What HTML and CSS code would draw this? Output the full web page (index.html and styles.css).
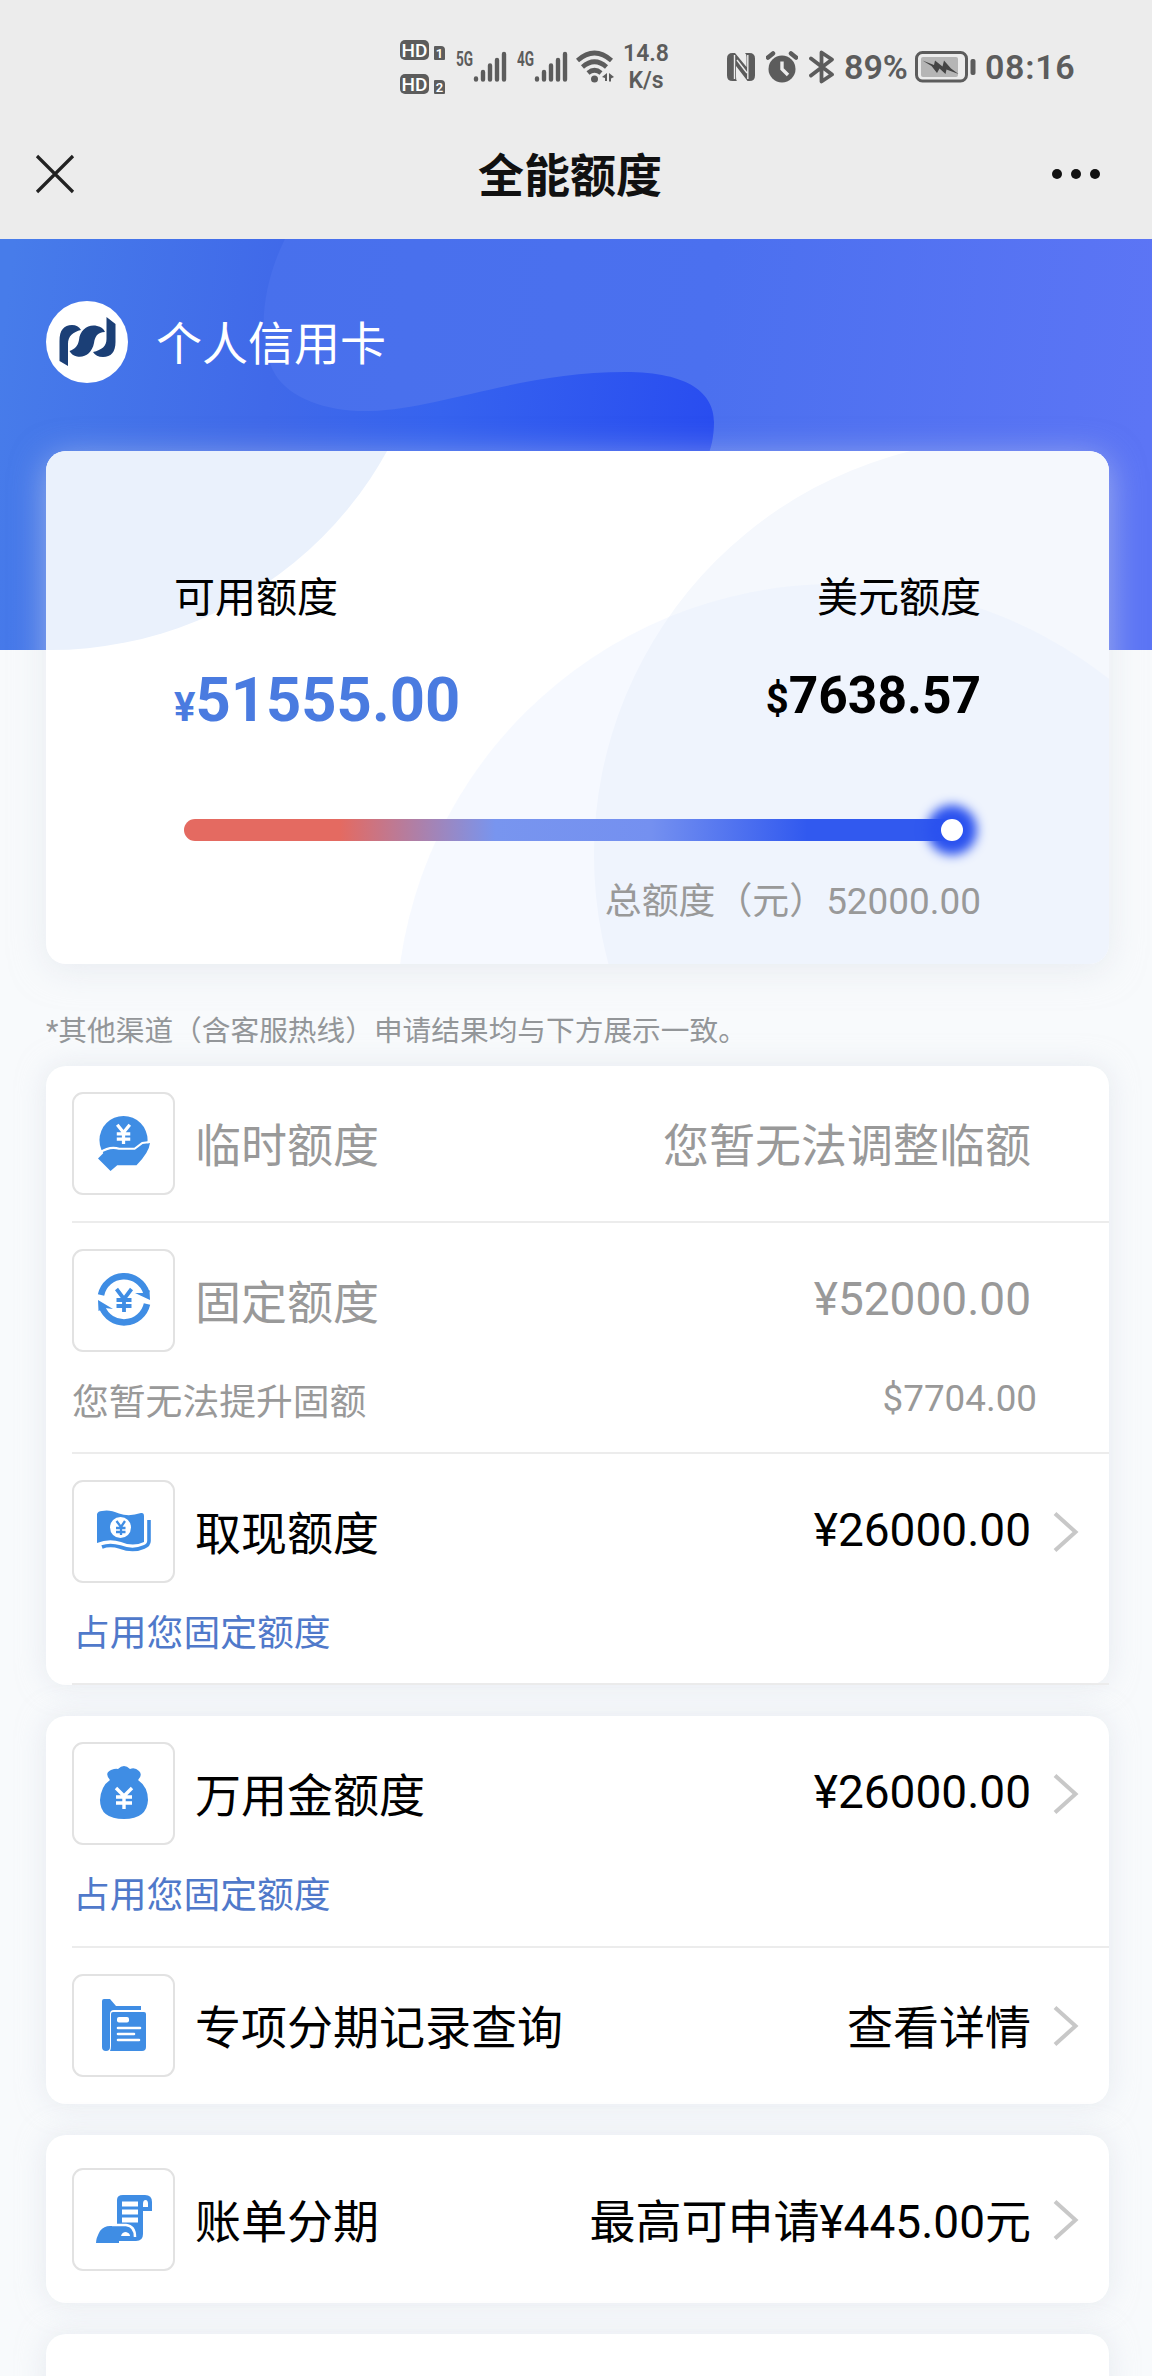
FILE: index.html
```html
<!DOCTYPE html>
<html lang="zh-CN">
<head>
<meta charset="utf-8">
<title>全能额度</title>
<link rel="stylesheet" href="styles.css">
</head>
<body>
<svg class="defs" width="0" height="0" aria-hidden="true">
  <symbol id="chevron" viewBox="0 0 26 42"><path d="M2 2.500L22.500 21L2 39.500" fill="none" stroke="#c8c8c8" stroke-width="4"/></symbol>
  <symbol id="signal" viewBox="0 0 34 32"><path d="M3 27.500v1M10 21v7.500M17 14.500v14M24 9v19.500M31 3v25.500" fill="none" stroke="#5c5c5c" stroke-width="4.400" stroke-linecap="round"/></symbol>
</svg>

<header class="top">
  <div class="status">
    <div class="hd">
      <div class="hd-row"><span class="hd-tag">HD</span><span class="sim">1</span></div>
      <div class="hd-row"><span class="hd-tag">HD</span><span class="sim">2</span></div>
    </div>
    <div class="net net-5g"><span class="gen">5G</span><svg width="34" height="32"><use href="#signal"/></svg></div>
    <div class="net net-4g"><span class="gen">4G</span><svg width="34" height="32"><use href="#signal"/></svg></div>
    <svg class="wifi" width="38" height="34" viewBox="0 0 38 34">
      <g fill="none" stroke="#5c5c5c" stroke-width="4.600"><path d="M1.500 10.500Q18.500-4.500 35.500 10.500"/><path d="M6.500 17Q18.500 6.500 30.500 17"/><path d="M12 23Q18.500 17.500 25 23"/></g>
      <circle cx="18.500" cy="29" r="3.500" fill="#5c5c5c"/><path d="M26 27l5-4v8h-2v-3zM33 23l5 4-3 1.500v3h-2z" fill="#5c5c5c"/>
    </svg>
    <div class="speed"><span>14.8</span><span>K/s</span></div>
    <svg class="nfc" width="30" height="30" viewBox="0 0 30 30"><path d="M6.500 1H9L20.500 15V5Q20.500 2 19 1H23.500Q29 1 29 6.500V23.500Q29 29 23.500 29H21.500L10 14V25Q10 28 11 29H6.500Q1 29 1 23.500V6.500Q1 1 6.500 1Z" fill="#5c5c5c"/><path d="M8.500 3V27M21.800 3V27M11 8l10 13" stroke="#ececec" stroke-width="1.400"/></svg>
    <svg class="alarm" width="32" height="32" viewBox="0 0 32 32"><circle cx="16" cy="18" r="13.500" fill="#5c5c5c"/><path d="M2 6.500l5-4M25 2.500l5 4" stroke="#5c5c5c" stroke-width="4.500" stroke-linecap="round"/><path d="M16 10.500V18l6 6" fill="none" stroke="#ececec" stroke-width="3.400"/></svg>
    <svg class="bt" width="26" height="34" viewBox="0 0 26 34"><path d="M2 8.500L23 24.500L12.500 31.500V2.500L23 9.500L2 25.500" fill="none" stroke="#5c5c5c" stroke-width="3.800" stroke-linejoin="round" stroke-linecap="round"/></svg>
    <span class="pct">89%</span>
    <svg class="battery" width="62" height="32" viewBox="0 0 62 32"><rect x="1.500" y="1.500" width="50" height="28.500" rx="6" fill="none" stroke="#5c5c5c" stroke-width="3"/><rect x="6" y="6" width="37" height="20" rx="2" fill="#b5b5b5"/><path d="M7.500 9.500L19 14l1-4.500 7.500 6L29 9.500l7 8 7.500 5.500-12-4.500-1 4.500-6-5.500-2.500 4.500-5.500-7z" fill="#444"/><rect x="55.500" y="8" width="5" height="16" rx="2" fill="#5c5c5c"/></svg>
    <span class="clock">08:16</span>
  </div>
  <nav class="nav">
    <svg class="close" width="40" height="40" viewBox="0 0 40 40"><path d="M2 2L38 38M38 2L2 38" stroke="#222" stroke-width="3.200"/></svg>
    <h1 class="title">全能额度</h1>
    <svg class="more" width="50" height="12" viewBox="0 0 50 12"><g fill="#111"><circle cx="6" cy="6" r="5"/><circle cx="25" cy="6" r="5"/><circle cx="44" cy="6" r="5"/></g></svg>
  </nav>
</header>

<section class="hero">
  <svg class="hero-bg" width="1152" height="411" viewBox="0 239 1152 411">
    <defs>
      <linearGradient id="base" gradientUnits="userSpaceOnUse" x1="0" y1="350" x2="710" y2="440"><stop offset="0" stop-color="#477cea"/><stop offset=".38" stop-color="#4069e9"/><stop offset=".62" stop-color="#3663ef"/><stop offset="1" stop-color="#294df0"/></linearGradient>
      <linearGradient id="wave" gradientUnits="userSpaceOnUse" x1="260" y1="300" x2="1152" y2="400"><stop offset="0" stop-color="#4870ec"/><stop offset=".5" stop-color="#4b70ef"/><stop offset="1" stop-color="#5c75f5"/></linearGradient>
    </defs>
    <rect y="239" width="1152" height="411" fill="url(#base)"/>
    <path d="M285 239C262 285 256 340 275 374C290 399 328 412 370 411C440 409 520 372 625 372C690 372 714 394 714 422C714 437 711 450 706 460L690 650H1152V239Z" fill="url(#wave)"/>
  </svg>
  <div class="brand">
    <svg width="82" height="82" viewBox="0 0 82 82"><circle cx="41" cy="41" r="41" fill="#fff"/>
      <path d="M13.500 40C13.500 29 18 24 26 24Q32 24 35 29C27 31 22 35 22 43V65L13.500 60Z" fill="#1b3f76"/>
      <path d="M23.500 50C29 48 32 45 33 39C34 29 42 23 51 25Q57 26 59 31C51 31 49 36 48 42C46 52 39 57 31 55.500Q26 54.500 23.500 50Z" fill="#1b3f76"/>
      <path d="M60.500 16L69.500 23V41C69.500 51 65 56 57 56Q50 56 47 51C56 49 60.500 45 60.500 38Z" fill="#1b3f76"/></svg>
    <span class="shift">个人信用卡</span>
  </div>
  <div class="quota">
    <svg class="quota-bg" width="1063" height="513" viewBox="46 451 1063 513">
      <circle cx="50" cy="265" r="385" fill="#eaf1fc"/>
      <circle cx="1010" cy="855" r="416" fill="#f5f8fd"/>
      <circle cx="836" cy="1024" r="440" fill="#e2eafe" fill-opacity=".3"/>
    </svg>
    <div class="quota-row">
      <div><div class="quota-label">可用额度</div><div class="amount-cny"><small>¥</small>51555.00</div></div>
      <div class="right"><div class="quota-label">美元额度</div><div class="amount-usd"><small>$</small>7638.57</div></div>
    </div>
    <div class="bar"><i class="knob"></i></div>
    <div class="total">总额度（元）52000.00</div>
  </div>
</section>

<main class="content">
  <p class="note">*其他渠道（含客服热线）申请结果均与下方展示一致。</p>

  <section class="card">
    <div class="row muted">
      <div class="line">
        <span class="icon"><svg width="52" height="56" viewBox="0 0 54 58"><circle cx="26.500" cy="26" r="25" fill="#3f8de4"/><path d="M20 10l6.500 8L33 10M26.500 18v12M19.500 19.500h14M19.500 25h14" fill="none" stroke="#fff" stroke-width="3.400"/><path d="M0 45L7 38Q13 34 22 36L38 37L46 30L54 29Q53 39 40 52H20L13 58Z" fill="#3f8de4"/><path d="M2 39Q12 32 22 35H38L46 29L54 28" fill="none" stroke="#fff" stroke-width="2.200"/></svg></span>
        <span class="name">临时额度</span><span class="value">您暂无法调整临额</span>
      </div>
    </div>
    <div class="row muted">
      <div class="line">
        <span class="icon"><svg width="54" height="54" viewBox="0 0 54 54"><path d="M4 22A23.500 23.500 0 0 1 49.500 20M50 31A23.500 23.500 0 0 1 5 34" fill="none" stroke="#3f8de4" stroke-width="6.500"/><path d="M38 20L46 20L52.500 17L53 27ZM16 36L8 35L1.500 38L1 27Z" fill="#3f8de4"/><path d="M19.500 16L27 26L34.500 16M27 26v13M19.500 27h15M19.500 33h15" fill="none" stroke="#3f8de4" stroke-width="3.800"/></svg></span>
        <span class="name">固定额度</span><span class="value num">¥52000.00</span>
      </div>
      <div class="sub"><span class="shift">您暂无法提升固额</span><span class="num">$7704.00</span></div>
    </div>
    <div class="row">
      <div class="line">
        <span class="icon"><svg width="54" height="42" viewBox="0 0 54 42"><path d="M0 4Q1 1 5 1Q12-1 22 3.500Q32 7 44 3Q47 2.500 47 6V32Q36 37 24 32Q12 28 0 33Z" fill="#3f8de4"/><circle cx="23.500" cy="17.500" r="10.500" fill="#fff"/><path d="M19.500 11l4.500 6 4-6M24 17v8M19 18h9.500M19 22h9.500" fill="none" stroke="#3f8de4" stroke-width="2.300"/><path d="M52 10V31Q52 35 47 37Q36 42 23 37Q13 34 5 37" fill="none" stroke="#3f8de4" stroke-width="3.600"/></svg></span>
        <span class="name">取现额度</span><span class="value num">¥26000.00</span><svg class="go" width="26" height="42"><use href="#chevron"/></svg>
      </div>
      <div class="sub link"><span class="shift">占用您固定额度</span></div>
    </div>
  </section>

  <section class="card">
    <div class="row tall">
      <div class="line">
        <span class="icon"><svg width="50" height="54" viewBox="0 0 50 54"><path d="M11 14Q5 7 12 4Q17 2 19 3Q25-3 31 3Q36 1 40 5Q44 9 39 14Q49 21 49 34Q48 53 25 53Q1 53 1 34Q2 20 11 14Z" fill="#3f8de4"/><path d="M17 22l8 8 8-8M25 30v13M17 31h16M17 37h16" fill="none" stroke="#fff" stroke-width="3.400"/></svg></span>
        <span class="name">万用金额度</span><span class="value num">¥26000.00</span><svg class="go" width="26" height="42"><use href="#chevron"/></svg>
      </div>
      <div class="sub link"><span class="shift">占用您固定额度</span></div>
    </div>
    <div class="row single">
      <div class="line">
        <span class="icon"><svg width="46" height="54" viewBox="0 0 46 54"><path d="M1 3Q1 1 3 1H9L15 8H40V12H13Q9 12 9 16V49Q9 53 5 53Q1 53 1 49Z" fill="#3f8de4"/><path d="M10 16Q10 14 12 14H43Q45 14 45 16V49Q45 53 41 53H9Q10 51 10 48Z" fill="#3f8de4"/><rect x="16" y="19" width="12" height="5.500" rx="2" fill="#fff"/><path d="M17 30h22M17 36h16M17 42h21" stroke="#fff" stroke-width="2.600" stroke-linecap="round"/></svg></span>
        <span class="name">专项分期记录查询</span><span class="value">查看详情</span><svg class="go" width="26" height="42"><use href="#chevron"/></svg>
      </div>
    </div>
  </section>

  <section class="card">
    <div class="row bill">
      <div class="line">
        <span class="icon"><svg width="58" height="50" viewBox="0 0 58 50"><path d="M22 6Q22 1 28 1H50Q57 1 57 8V17H48V40Q48 47 41 47H24V49H1Q1 44 5 37Q9 32 15 32H22Z" fill="#3f8de4"/><path d="M27 10h16M27 18h16M27 26h16" stroke="#fff" stroke-width="5"/><path d="M48 13V10Q48 6 50.500 6Q53 6 53 10V13Z" fill="#fff"/><path d="M17 31H31Q40 32 40 43" fill="none" stroke="#fff" stroke-width="2.500"/><path d="M26 42Q27 38 31 38Q35 39 35 42Z" fill="#fff"/></svg></span>
        <span class="name">账单分期</span><span class="value">最高可申请¥445.00元</span><svg class="go" width="26" height="42"><use href="#chevron"/></svg>
      </div>
    </div>
  </section>

  <section class="card next"></section>
</main>
</body>
</html>
```
FILE: styles.css
```css
* { box-sizing: border-box; }
body {
  margin: 0;
  width: 1152px;
  height: 2376px;
  overflow: hidden;
  background: #f8fafc;
  color: #000;
  font-family: Roboto, "Noto Sans CJK SC", sans-serif;
}
svg { display: block; flex: none; }
.defs { position: absolute; }

.top { height: 239px; background: #ececec; }
.status {
  display: flex;
  align-items: center;
  height: 134px;
  padding-left: 400px;
  color: #5c5c5c;
  font-weight: 600;
  white-space: nowrap;
}
.hd { display: flex; flex-direction: column; gap: 14px; width: 56px; }
.hd-row { display: flex; align-items: flex-end; gap: 5px; height: 20px; }
.hd-tag {
  width: 29px; height: 20px;
  border-radius: 5px;
  background: #5c5c5c; color: #fff;
  font-size: 19px; line-height: 21px; font-weight: 500; text-align: center;
}
.sim {
  width: 11px; height: 14px;
  border-radius: 1px 4px 1px 1px;
  background: #5c5c5c; color: #fff;
  font-size: 13px; line-height: 15px; text-align: center;
}
.net { display: flex; align-items: flex-start; height: 32px; width: 61px; }
.net-4g { width: 59px; }
.gen { width: 17px; font-size: 20px; line-height: 16px; font-weight: 700; transform: scaleX(.68); transform-origin: 0 0; }
.speed { display: flex; flex-direction: column; align-items: center; width: 46px; margin-left: 9px; font-size: 23px; line-height: 27px; }
.nfc { margin-left: 57px; }
.alarm { margin-left: 10px; }
.bt { margin-left: 11px; }
.pct { width: 71px; margin-left: 9px; font-size: 34px; }
.clock { margin-left: 8px; font-size: 34px; letter-spacing: .7px; }

.nav { display: flex; align-items: center; height: 80px; padding: 0 51px 0 35px; }
.title { flex: 1; margin: 4px 0 0; padding-left: 14px; text-align: center; font-size: 46px; line-height: 60px; font-weight: 700; color: #111; }

.hero { position: relative; padding: 62px 43px 0 46px; }
.hero-bg { position: absolute; left: 0; top: 0; }
.brand { position: relative; display: flex; align-items: center; gap: 28px; height: 82px; color: #fff; font-size: 46px; line-height: 60px; }
.shift { padding-top: 4px; }
.quota {
  position: relative;
  height: 513px;
  margin-top: 68px;
  padding: 115px 128px 0 128px;
  border-radius: 20px;
  background: #fff;
  box-shadow: 0 6px 34px rgba(218, 224, 232, .55);
}
.quota-bg { position: absolute; left: 0; top: 0; border-radius: 20px; }
.quota-row { position: relative; display: flex; justify-content: space-between; height: 253px; }
.right { text-align: right; }
.quota-label { font-size: 41px; line-height: 64px; }
.amount-cny { margin-top: 33px; color: #4a7be0; font-size: 61.500px; line-height: 74px; font-weight: 700; }
.amount-cny small { font-size: 40px; }
.amount-usd { margin-top: 33px; font-size: 51.500px; line-height: 66px; font-weight: 700; }
.amount-usd small { font-size: 40px; }
.bar {
  position: relative;
  display: flex; justify-content: flex-end; align-items: center;
  width: 779px; height: 22px;
  margin-left: 10px;
  border-radius: 11px;
  background: linear-gradient(90deg, #e46a61 20%, #7895ef 40%, #7490f0 60%, #3159ef 80%);
}
.knob { width: 22px; height: 22px; border-radius: 50%; background: #fff; box-shadow: 0 0 11px 14px #2b52ef; }
.total { position: relative; margin-top: 35px; text-align: right; color: #999; font-size: 36.900px; line-height: 52px; }

.content { padding: 45px 43px 0 46px; }
.note { margin: 0; height: 57px; font-size: 28.700px; line-height: 44px; color: #939699; white-space: nowrap; }
.card { margin-bottom: 31px; border-radius: 20px; background: #fff; box-shadow: 0 0 28px rgba(215, 220, 230, .55); }
.row { height: 231px; margin-left: 26px; padding-top: 26px; border-bottom: 2px solid #ececec; }
.row:first-child.muted { height: 157px; }
.row.tall { height: 232px; }
.row.single { height: 156px; border-bottom: 0; }
.row.bill { height: 168px; padding-top: 33px; border-bottom: 0; }
.line { position: relative; display: flex; align-items: center; height: 102px; padding-right: 78px; font-size: 46px; line-height: 60px; white-space: nowrap; }
.icon { display: flex; flex: none; align-items: center; justify-content: center; width: 103px; height: 103px; border: 2px solid #e2e2e2; border-radius: 11px; }
.name { margin-left: 20px; padding-top: 6px; }
.value { margin-left: auto; padding-top: 5px; }
.value.num { padding: 0 0 2px; }
.go { position: absolute; right: 30px; top: 31px; }
.sub { display: flex; justify-content: space-between; padding: 23px 72px 0 0; font-size: 36.800px; line-height: 50px; }
.link { padding-left: 1px; color: #5079ca; }
.muted { color: #999; }
.next { height: 90px; }
```
